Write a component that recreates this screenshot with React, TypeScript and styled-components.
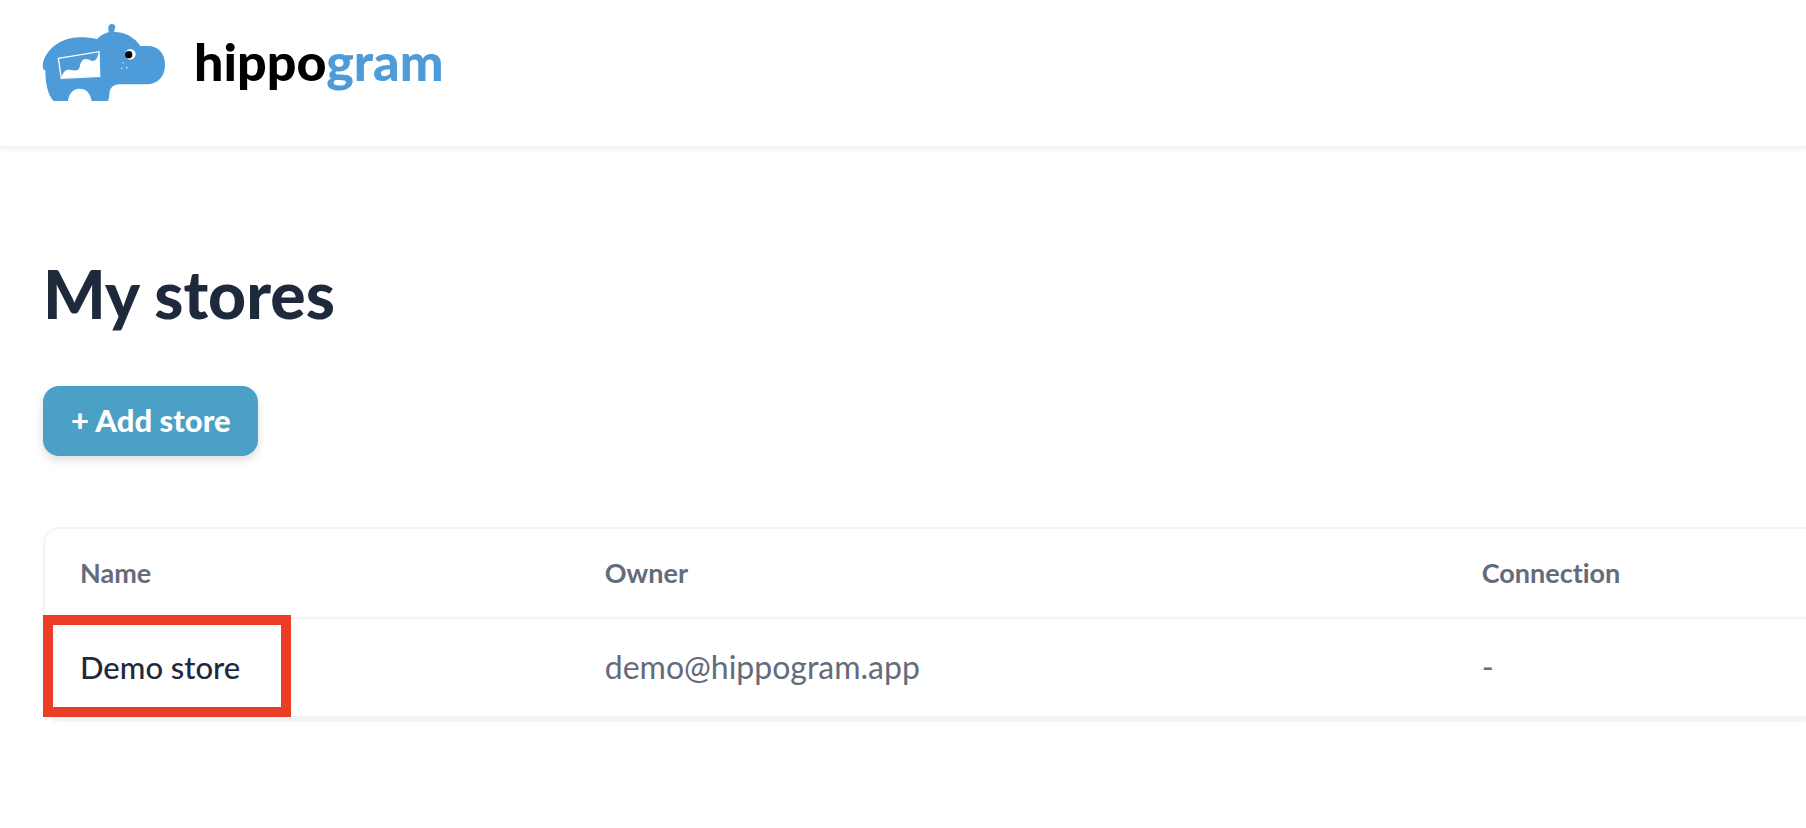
import React from 'react';
import styled, { createGlobalStyle } from 'styled-components';

const color = {
  ink: '#1e293b',
  muted: '#646b7a',
  line: '#f1f5f9',
  teal: '#4aa0c5',
  brand: '#4d9cd9',
  marker: '#ea3f26',
};

const GlobalStyle = createGlobalStyle`
  *, *::before, *::after { box-sizing: border-box; }
  body {
    margin: 0;
    background: #fff;
    color: ${color.ink};
    font-family: Lato, "Liberation Sans", sans-serif;
    font-variant-ligatures: none;
    overflow-x: hidden;
  }
`;

const Header = styled.header`
  display: flex;
  padding: 23px 42px 44px;
  border-bottom: 3px solid ${color.line};
  box-shadow: 0 2px 4px rgba(15, 23, 42, 0.04);
`;

const Brand = styled.a`
  display: flex;
  align-items: flex-start;
  gap: 28px;
  color: #000;
  text-decoration: none;
`;

const HippoIcon = styled.svg`
  display: block;
  width: 124px;
  height: 79px;
`;

const Wordmark = styled.span`
  font-size: 52px;
  font-weight: 900;
  line-height: 76px;
`;

const WordmarkAccent = styled.span`
  color: ${color.brand};
`;

const Main = styled.main`
  display: flex;
  flex-direction: column;
  align-items: flex-start;
  padding: 105px 0 108px 43px;
`;

const Title = styled.h1`
  margin: 0;
  font-size: 66px;
  font-weight: 900;
  line-height: 80px;
`;

const AddButton = styled.button`
  height: 70px;
  margin: 52px 0 71px;
  padding: 0 27px 2px 28px;
  border: 0;
  border-radius: 16px;
  background: ${color.teal};
  box-shadow: 0 4px 10px rgba(0, 0, 0, 0.14);
  color: #fff;
  font: 900 31px/40px Lato, "Liberation Sans", sans-serif;
  cursor: pointer;
`;

const Card = styled.div`
  width: 100%;
  border: 2px solid ${color.line};
  border-right: 0;
  border-radius: 16px 0 0 16px;
  box-shadow: 0 4px 2px ${color.line};
`;

const Table = styled.table`
  width: 100%;
  table-layout: fixed;
  border-collapse: separate;
  border-spacing: 0;
  text-align: left;
`;

const Column = styled.col<{ $width?: string }>`
  width: ${({ $width }) => $width ?? 'auto'};
`;

const HeadCell = styled.th`
  height: 90px;
  padding: 0 35px;
  border-bottom: 2px solid ${color.line};
  color: ${color.muted};
  font-size: 27px;
  font-weight: 700;
  line-height: 32px;
`;

const Cell = styled.td`
  position: relative;
  height: 97px;
  padding: 0 35px 2px;
  color: ${color.muted};
  font-size: 32px;
  line-height: 40px;
`;

const StoreLink = styled.a`
  color: ${color.ink};
  font-size: 31px;
  font-weight: 500;
  text-decoration: none;
`;

const Marker = styled.span`
  position: absolute;
  top: -4px;
  bottom: -1px;
  left: -2px;
  width: 248px;
  border: 10px solid ${color.marker};
  pointer-events: none;
`;

const stores = [{ name: 'Demo store', owner: 'demo@hippogram.app', connection: '-', marked: true }];

function Hippo() {
  return (
    <HippoIcon viewBox="36 39 372 237" aria-hidden="true">
      <path
        fill={color.brand}
        d="M71 273C57 259 46 229 46 181C39 181 37 172 39 160C45 128 82 83 150 82C170 82 187 84 201 87C211 77 223 70 236 67C236 61 233 55 236 48C241 38 256 41 256 51C256 57 252 60 253 66C286 66 315 83 331 108L354 108C386 108 405 132 405 164C405 199 384 222 350 223L269 223C246 223 238 239 238 254Q238 265 234 273L185 273C181 249 169 236 149 236C130 236 117 249 114 273Z"
      />
      <path fill={color.brand} stroke="#fff" strokeWidth="4" d="M85 145L207 125L209 199L94 205Z" />
      <path
        fill="#fff"
        d="M95 204C99 185 106 178 119 179C132 180 145 187 149 171C152 155 158 145 170 147C181 150 187 156 195 151C202 147 203 137 206 128L209 199Z"
      />
      <circle cx="301" cy="133" r="16" fill="#fff" />
      <circle cx="296" cy="134" r="11" fill="#000" />
      <g fill="#c5e2f7">
        <circle cx="279" cy="159" r="2.5" />
        <circle cx="275" cy="175" r="2.5" />
        <circle cx="290" cy="173" r="2.5" />
      </g>
    </HippoIcon>
  );
}

export default function App() {
  return (
    <>
      <GlobalStyle />
      <Header>
        <Brand href="#">
          <Hippo />
          <Wordmark>
            hippo<WordmarkAccent>gram</WordmarkAccent>
          </Wordmark>
        </Brand>
      </Header>
      <Main>
        <Title>My stores</Title>
        <AddButton type="button">+ Add store</AddButton>
        <Card>
          <Table>
            <colgroup>
              <Column $width="29.8%" />
              <Column $width="49.8%" />
              <Column />
            </colgroup>
            <thead>
              <tr>
                <HeadCell scope="col">Name</HeadCell>
                <HeadCell scope="col">Owner</HeadCell>
                <HeadCell scope="col">Connection</HeadCell>
              </tr>
            </thead>
            <tbody>
              {stores.map((store) => (
                <tr key={store.name}>
                  <Cell>
                    <StoreLink href="#">{store.name}</StoreLink>
                    {store.marked && <Marker />}
                  </Cell>
                  <Cell>{store.owner}</Cell>
                  <Cell>{store.connection}</Cell>
                </tr>
              ))}
            </tbody>
          </Table>
        </Card>
      </Main>
    </>
  );
}
